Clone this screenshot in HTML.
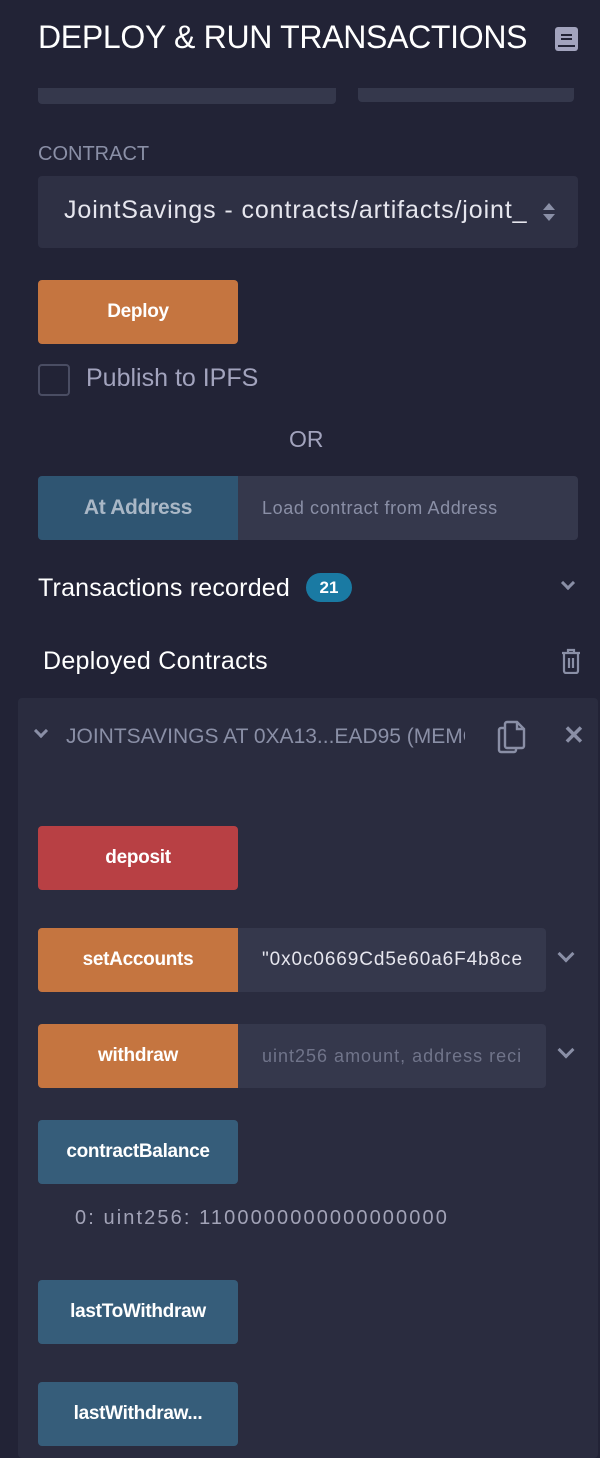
<!DOCTYPE html>
<html><head><style>
*{margin:0;padding:0;box-sizing:border-box}
body{width:600px;height:1448px;background:#222336;font-family:"Liberation Sans",sans-serif;position:relative;overflow:hidden;color:#fff}
.a{position:absolute}
.btn{position:absolute;width:200px;height:64px;border-radius:4px;color:#fff;font-weight:bold;font-size:19px;display:flex;align-items:center;justify-content:center;letter-spacing:-0.3px}
.or{background:#c57540}.rd{background:#b84044}.bl{background:#365d7a}
.inp{position:absolute;background:#35384c;border-radius:0 4px 4px 0;height:64px;display:flex;align-items:center;padding-left:24px;font-size:19px;white-space:nowrap;overflow:hidden}
.chev{position:absolute;width:12px;height:12px;border-right:3.5px solid #8a8fa6;border-bottom:3.5px solid #8a8fa6;transform:rotate(45deg)}
</style></head><body>
<div class="a" style="left:38px;top:19px;font-size:32px;letter-spacing:-0.3px">DEPLOY &amp; RUN TRANSACTIONS</div>
<div class="a" style="left:555px;top:27px;width:23px;height:24px;background:#a2a3bd;border-radius:3px"><div class="a" style="left:6px;top:7px;width:11px;height:2px;background:#222336"></div><div class="a" style="left:6px;top:11px;width:11px;height:2px;background:#222336"></div><div class="a" style="left:3px;top:18px;width:17px;height:2px;background:#222336"></div></div>
<div class="a" style="left:38px;top:88px;width:298px;height:16px;background:#35384c;border-radius:0 0 4px 4px"></div>
<div class="a" style="left:358px;top:88px;width:216px;height:14px;background:#35384c;border-radius:0 0 4px 4px"></div>
<div class="a" style="left:38px;top:143px;font-size:20px;color:#8a8fa6">CONTRACT</div>
<div class="a" style="left:38px;top:176px;width:540px;height:72px;background:#2e3044;border-radius:4px"></div>
<div class="a" style="left:64px;top:196px;font-size:25px;letter-spacing:0.9px;color:#e6e6ee;white-space:nowrap;width:472px;overflow:hidden">JointSavings - contracts/artifacts/joint_</div>
<div class="a" style="left:543px;top:203px;width:0;height:0;border-left:6px solid transparent;border-right:6px solid transparent;border-bottom:7px solid #8a8fa6"></div>
<div class="a" style="left:543px;top:214px;width:0;height:0;border-left:6px solid transparent;border-right:6px solid transparent;border-top:7px solid #8a8fa6"></div>
<div class="btn or" style="left:38px;top:280px">Deploy</div>
<div class="a" style="left:38px;top:364px;width:32px;height:32px;border:2px solid #4a4d63;border-radius:4px;background:#222336"></div>
<div class="a" style="left:86px;top:364px;font-size:25px;color:#a2a3bd">Publish to IPFS</div>
<div class="a" style="left:289px;top:426px;font-size:23px;color:#a2a3bd">OR</div>
<div class="btn" style="left:38px;top:476px;background:#2f5572;border-radius:4px 0 0 4px;color:#a9b7c6;font-size:21px;font-weight:bold">At Address</div>
<div class="inp" style="left:238px;top:476px;width:340px;color:#8a8fa6;font-size:18px;letter-spacing:0.6px">Load contract from Address</div>
<div class="a" style="left:38px;top:574px;font-size:25px;letter-spacing:0.2px">Transactions recorded</div>
<div class="a" style="left:306px;top:573px;width:46px;height:29px;background:#1a7aa3;border-radius:15px;font-size:17px;font-weight:bold;text-align:center;line-height:29px">21</div>
<div class="chev" style="left:563px;top:578px;width:10px;height:10px;border-width:3px"></div>
<div class="a" style="left:43px;top:647px;font-size:25px;letter-spacing:0.3px">Deployed Contracts</div>
<svg class="a" style="left:560px;top:648px" width="22" height="26" viewBox="0 0 22 26"><path d="M2 5h18M8 5V2h6v3M4 5v18a2 2 0 0 0 2 2h10a2 2 0 0 0 2-2V5M9 10v10M13 10v10" stroke="#8a8fa6" stroke-width="2.2" fill="none"/></svg>
<div class="a" style="left:18px;top:698px;width:580px;height:760px;background:#2a2c3f;border-radius:4px"></div>
<div class="chev" style="left:36px;top:726px;width:10px;height:10px;border-width:3px"></div>
<div class="a" style="left:66px;top:725px;font-size:21px;color:#8a8fa6;white-space:nowrap;width:399px;overflow:hidden">JOINTSAVINGS AT 0XA13...EAD95 (MEMORY)</div>
<svg class="a" style="left:497px;top:720px" width="30" height="34" viewBox="0 0 30 34"><path d="M10 2h10l7 7v17a2 2 0 0 1-2 2H10a2 2 0 0 1-2-2V4a2 2 0 0 1 2-2zM20 2v7h7M8 8H4a2 2 0 0 0-2 2v20a2 2 0 0 0 2 2h13a2 2 0 0 0 2-2v-2" stroke="#8a8fa6" stroke-width="2.4" fill="none"/></svg>
<div class="a" style="left:563px;top:720px;font-size:26px;color:#8a8fa6;font-weight:bold">✕</div>
<div class="btn rd" style="left:38px;top:826px">deposit</div>
<div class="btn or" style="left:38px;top:928px;border-radius:4px 0 0 4px">setAccounts</div>
<div class="inp" style="left:238px;top:928px;width:308px;color:#e6e6ee;letter-spacing:0.9px">"0x0c0669Cd5e60a6F4b8ce</div>
<div class="chev" style="left:560px;top:948px"></div>
<div class="btn or" style="left:38px;top:1024px;border-radius:4px 0 0 4px">withdraw</div>
<div class="inp" style="left:238px;top:1024px;width:308px;color:#70748a;font-size:18px;letter-spacing:1px">uint256 amount, address reci</div>
<div class="chev" style="left:560px;top:1044px"></div>
<div class="btn bl" style="left:38px;top:1120px">contractBalance</div>
<div class="a" style="left:75px;top:1207px;font-size:20px;letter-spacing:2.1px;color:#a2a3b7">0: uint256: 1100000000000000000</div>
<div class="btn bl" style="left:38px;top:1280px">lastToWithdraw</div>
<div class="btn bl" style="left:38px;top:1382px">lastWithdraw...</div>
</body></html>
